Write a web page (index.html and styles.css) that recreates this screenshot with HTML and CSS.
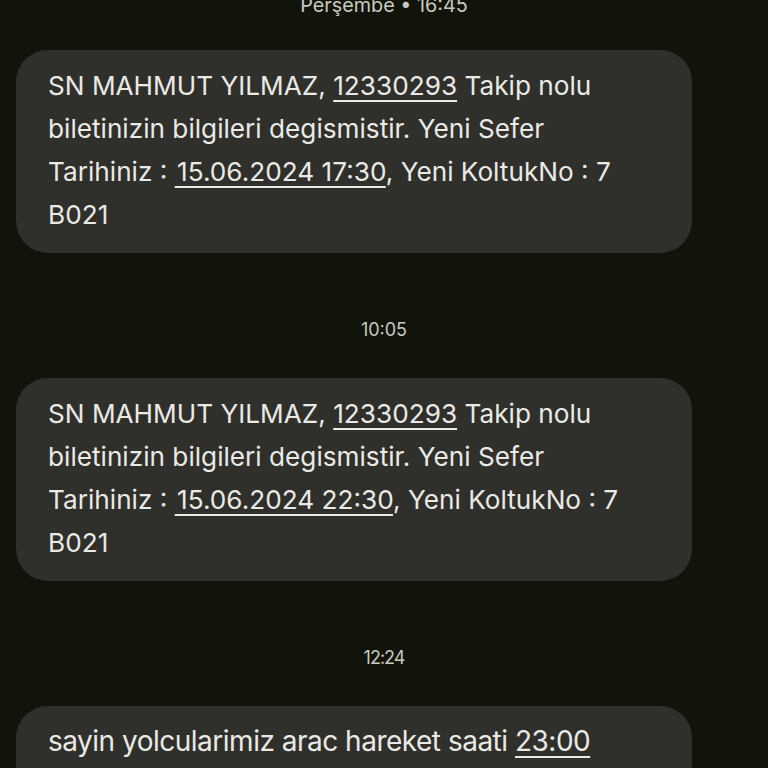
FILE: index.html
```html
<!DOCTYPE html>
<html lang="tr">
<head>
<meta charset="utf-8">
<link rel="stylesheet" href="styles.css">
</head>
<body>
<div class="thread">
  <div class="stamp stamp-top">Perşembe • 16:45</div>
  <div class="bubble">SN MAHMUT YILMAZ, <span class="link">12330293</span> Takip nolu<br>biletinizin bilgileri degismistir. Yeni Sefer<br>Tarihiniz : <span class="link">&#8202;15.06.2024 17:30</span>, Yeni KoltukNo : 7<br>B021</div>
  <div class="stamp">10:05</div>
  <div class="bubble">SN MAHMUT YILMAZ, <span class="link">12330293</span> Takip nolu<br>biletinizin bilgileri degismistir. Yeni Sefer<br>Tarihiniz : <span class="link">&#8202;15.06.2024 22:30</span>, Yeni KoltukNo : 7<br>B021</div>
  <div class="stamp stamp-narrow">12:24</div>
  <div class="bubble bubble-narrow">sayin yolcularimiz arac hareket saati <span class="link">23:00</span><br>lutfen zamaninda perona geliniz</div>
</div>
</body>
</html>
```
FILE: styles.css
```css
html, body {
  margin: 0;
  padding: 0;
  background: #11140a;
  height: 768px;
  overflow: hidden;
}
.thread {
  display: flex;
  flex-direction: column;
  align-items: flex-start;
  padding: 0 76px 0 16px;
  font-family: Inter, "Open Sans", "Liberation Sans", sans-serif;
}
.stamp {
  align-self: stretch;
  text-align: center;
  color: #c9c9c0;
  font-size: 18px;
  line-height: 24px;
  height: 24px;
  margin: 65px 0 36px 60px;
}
.stamp-top {
  font-size: 19.8px;
  margin: -7px 0 33px 60px;
}
.stamp-narrow {
  letter-spacing: -1px;
}
.bubble {
  box-sizing: border-box;
  width: 676px;
  background: #2f302c;
  border-radius: 32px;
  padding: 14px 32px 17px 32px;
  color: #ebe9e3;
  font-size: 26.2px;
  line-height: 43px;
  white-space: nowrap;
}
.bubble-narrow {
  font-size: 28px;
  letter-spacing: -0.5px;
}
.link {
  text-decoration: underline;
  text-decoration-thickness: 2px;
  text-underline-offset: 5px;
}
```
